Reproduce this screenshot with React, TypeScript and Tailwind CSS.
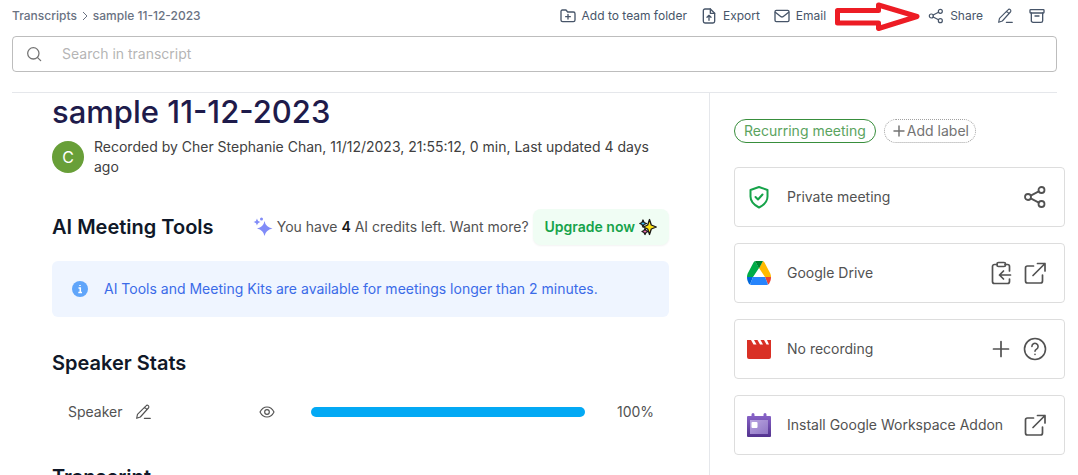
import type { ReactNode } from "react"

const App = () => {
  return (
    <div className="h-screen overflow-hidden bg-white pl-3 pr-[13px] font-['Inter',sans-serif] text-sm text-neutral-600">
      <Header />
      <SearchBar />
      <div className="mr-2 mt-5 border-t border-gray-200" />
      <div className="flex">
        <Transcript />
        <Sidebar />
      </div>
    </div>
  )
}


const Header = () => {
  return (
    <header className="mr-2 flex h-8 items-center justify-between text-xs text-[#475569]">
      <nav className="flex items-center gap-1 font-medium text-gray-500">
        <a href="#transcripts">Transcripts</a>
        <ChevronIcon />
        <a href="#sample">sample 11-12-2023</a>
      </nav>
      <div className="flex items-center">
        <HeaderAction icon={<FolderPlusIcon />} text="Add to team folder" />
        <HeaderAction icon={<FileUpIcon />} text="Export" />
        <HeaderAction icon={<MailIcon />} text="Email" />
        <PointerArrow />
        <HeaderAction icon={<ShareIcon className="size-4" />} text="Share" />
        <button aria-label="Rename" className="mr-4"><PencilIcon className="size-4" /></button>
        <button aria-label="Archive" className="mr-3"><ArchiveIcon /></button>
      </div>
    </header>
  )
}

type HeaderActionProps = { icon: ReactNode, text: string }
const HeaderAction = ({ icon, text }: HeaderActionProps) => {
  return (
    <button className="mr-3.5 flex items-center gap-1.5">
      {icon}
      <span>{text}</span>
    </button>
  )
}

const SearchBar = () => {
  return (
    <label className="mr-2 mt-1 flex h-9 items-center gap-5 rounded border border-neutral-400/70 px-[13px] text-neutral-500">
      <SearchIcon />
      <input
        type="text"
        aria-label="Search in transcript"
        placeholder="Search in transcript"
        className="w-full outline-none placeholder:text-neutral-400/80"
      />
    </label>
  )
}


const Transcript = () => {
  return (
    <main className="min-w-0 flex-1 px-10">
      <h1 className="text-[31px] font-medium leading-[38px] text-[#1e1b4b]">sample 11-12-2023</h1>
      <div className="mt-1.5 flex items-center gap-2.5">
        <span className="flex size-8 shrink-0 items-center justify-center rounded-full bg-[#689f38] text-base text-white">C</span>
        <p className="leading-5 text-neutral-700">
          Recorded by Cher Stephanie Chan, 11/12/2023, 21:55:12, 0 min, Last updated 4 days ago
        </p>
      </div>

      <section className="mt-8 flex items-center justify-between">
        <h2 className="text-xl font-semibold text-gray-900">AI Meeting Tools</h2>
        <div className="flex items-center gap-1">
          <SparklesIcon />
          <span>You have <b className="font-semibold text-neutral-900">4</b> AI credits left. Want more?</span>
          <button className="flex h-9 items-center gap-1 rounded-lg bg-green-50 px-3 font-semibold text-[#16a34a] shadow-xs">
            Upgrade now
            <SparkleEmoji />
          </button>
        </div>
      </section>

      <div className="mt-4 flex h-14 items-center gap-4 rounded-md bg-[#eff5ff] px-5 text-[#3b6be8]">
        <InfoIcon />
        <p>AI Tools and Meeting Kits are available for meetings longer than 2 minutes.</p>
      </div>

      <h2 className="mt-8 text-xl font-semibold text-gray-900">Speaker Stats</h2>
      <SpeakerRow name="Speaker" percent={100} />
      <h2 className="mt-9 text-xl font-semibold text-gray-900">Transcript</h2>
    </main>
  )
}

type SpeakerRowProps = { name: string, percent: number }
const SpeakerRow = ({ name, percent }: SpeakerRowProps) => {
  return (
    <div className="mt-5 flex h-[30px] items-center px-4">
      <div className="flex w-[243px] items-center gap-3">
        <span>{name}</span>
        <button aria-label="Rename speaker"><PencilIcon className="size-4" /></button>
        <button aria-label="Show speaker" className="ml-auto mr-9"><EyeIcon /></button>
      </div>
      <div className="h-2.5 flex-1 rounded-full">
        <div className="h-full rounded-full bg-[#03a9f4]" style={{ width: `${percent}%` }} />
      </div>
      <span className="ml-8 w-9">{percent}%</span>
    </div>
  )
}


const Sidebar = () => {
  return (
    <aside className="h-screen w-[356px] shrink-0 border-l border-gray-200 pl-6 pt-[26px]">
      <div className="flex gap-2">
        <button className="h-6 rounded-full border border-[#388e3c] px-[9px] text-[#5aa35e]">Recurring meeting</button>
        <button className="flex h-6 items-center rounded-full border border-dotted border-neutral-400 px-1.5 text-neutral-500">
          <PlusIcon className="size-4" width={2.2} />
          Add label
        </button>
      </div>
      <div className="mt-6 flex flex-col gap-4">
        <Card icon={<ShieldIcon />} text="Private meeting">
          <button aria-label="Share"><ShareIcon className="size-6" /></button>
        </Card>
        <Card icon={<DriveIcon />} text="Google Drive">
          <button aria-label="Copy to clipboard"><ClipboardIcon /></button>
          <button aria-label="Open Google Drive"><ExternalIcon /></button>
        </Card>
        <Card icon={<ClapperIcon />} text="No recording">
          <button aria-label="Add recording"><PlusIcon className="size-6" width={1.7} /></button>
          <button aria-label="Help"><HelpIcon /></button>
        </Card>
        <Card icon={<CalendarIcon />} text="Install Google Workspace Addon">
          <button aria-label="Install addon"><ExternalIcon /></button>
        </Card>
      </div>
    </aside>
  )
}

type CardProps = { icon: ReactNode, text: string, children: ReactNode }
const Card = ({ icon, text, children }: CardProps) => {
  return (
    <div className="flex h-[60px] items-center gap-4 rounded border border-neutral-300/80 pl-3 pr-[17px]">
      {icon}
      <span className="flex-1">{text}</span>
      <div className="flex gap-2.5 text-neutral-600">{children}</div>
    </div>
  )
}


type IconProps = { className?: string, width?: number, children: ReactNode }
const Icon = ({ className = "size-4", width = 1.5, children }: IconProps) => (
  <svg
    viewBox="0 0 24 24"
    className={`${className} shrink-0`}
    fill="none"
    stroke="currentColor"
    strokeWidth={width}
    strokeLinecap="round"
    strokeLinejoin="round"
    aria-hidden="true"
  >
    {children}
  </svg>
)

const ChevronIcon = () => (
  <svg viewBox="0 0 8 12" className="h-3 w-2" fill="none" stroke="currentColor" aria-hidden="true">
    <path d="M2 2l4 4-4 4" />
  </svg>
)

const FolderPlusIcon = () => (
  <Icon width={2}>
    <path d="M3.500 3A2 2 0 0 0 1.500 5v13a2.500 2.500 0 0 0 2.500 2.500h16a2.500 2.500 0 0 0 2.500-2.500V8.500A2.500 2.500 0 0 0 20 6h-8.500L9 3z" />
    <path d="M12 9.500v7M8.500 13h7" />
  </Icon>
)

const FileUpIcon = () => (
  <Icon width={2}>
    <path d="M14 1.500H6A2.500 2.500 0 0 0 3.500 4v16A2.500 2.500 0 0 0 6 22.500h12a2.500 2.500 0 0 0 2.500-2.500V8z" />
    <path d="M14 1.500V8h6.500M12 18.500v-7M9 14l3-3 3 3" />
  </Icon>
)

const MailIcon = () => (
  <Icon width={2}>
    <rect x="1.500" y="3.500" width="21" height="17" rx="2" />
    <path d="M2 6.500l8.500 6.500q1.500 1 3 0L22 6.500" />
  </Icon>
)

const ShareIcon = ({ className }: { className: string }) => (
  <Icon className={className} width={1.800}>
    <circle cx="5" cy="12" r="3" />
    <circle cx="18.500" cy="5" r="3" />
    <circle cx="18.500" cy="19" r="3" />
    <path d="M7.700 10.600l8.100-4.200M7.700 13.400l8.100 4.200" />
  </Icon>
)

const PencilIcon = ({ className }: { className: string }) => (
  <Icon className={className} width={1.700}>
    <path d="M2.500 21.500l1.200-6L16.500 2.700a2.400 2.400 0 0 1 3.600 3.300L8 19.500zM14.500 5l3.300 3M14 21.500h9" />
  </Icon>
)

const ArchiveIcon = () => (
  <Icon width={2}>
    <rect x="1.500" y="2.500" width="21" height="5" rx="1" />
    <path d="M3.500 7.500V19A2.500 2.500 0 0 0 6 21.500h12a2.500 2.500 0 0 0 2.500-2.500V7.500M9 12h6" />
  </Icon>
)

const SearchIcon = () => (
  <Icon width={1.900}>
    <circle cx="11" cy="11" r="8.500" />
    <path d="M17 17l5 5" />
  </Icon>
)

const EyeIcon = () => (
  <Icon width={1.700}>
    <path d="M1.500 12C4 7 8 4.500 12 4.500S20 7 22.500 12C20 17 16 19.500 12 19.500S4 17 1.500 12z" />
    <circle cx="12" cy="12" r="3.500" />
  </Icon>
)

const PlusIcon = ({ className, width }: { className: string, width: number }) => (
  <Icon className={className} width={width}>
    <path d="M12 4.500v15M4.500 12h15" />
  </Icon>
)

const ShieldIcon = () => (
  <Icon className="size-6 text-[#16a34a]" width={2}>
    <path d="M12 2l8.500 3v6.500c0 5-3.500 8.500-8.500 11-5-2.500-8.500-6-8.500-11V5z" />
    <path d="M8.500 12l2.500 2.500 4.500-5" />
  </Icon>
)

const ClipboardIcon = () => (
  <Icon className="size-6" width={1.700}>
    <path d="M8 3.500H5.500A2 2 0 0 0 3.500 5.500v15a2 2 0 0 0 2 2h13a2 2 0 0 0 2-2V18M16 3.500h2.500a2 2 0 0 1 2 2V10" />
    <rect x="8" y="1.500" width="8.500" height="4" rx="1.500" />
    <path d="M21.500 14H10.500M14.500 10l-4 4 4 4" />
  </Icon>
)

const ExternalIcon = () => (
  <Icon className="size-6" width={1.700}>
    <path d="M10.500 5H4.500a2 2 0 0 0-2 2v13a2 2 0 0 0 2 2h13a2 2 0 0 0 2-2v-6" />
    <path d="M14.500 2.500H22V10M22 2.500L10 14.500" />
  </Icon>
)

const HelpIcon = () => (
  <Icon className="size-6" width={1.600}>
    <circle cx="12" cy="12" r="10.500" />
    <path d="M8.900 9.500a3.100 3.100 0 1 1 4.700 2.600c-1 .6-1.600 1-1.600 2.200M12 17.200v.3" />
  </Icon>
)

const InfoIcon = () => (
  <svg viewBox="0 0 16 16" className="size-4 shrink-0" aria-hidden="true">
    <circle cx="8" cy="8" r="8" fill="#60a5fa" />
    <path d="M6.500 7h1.800v4.500M6.300 11.500h3.700M8 4v1" stroke="#fff" strokeWidth="1.500" fill="none" />
  </svg>
)

const SparklesIcon = () => (
  <svg viewBox="0 0 20 20" className="size-5 shrink-0" fill="#818cf8" aria-hidden="true">
    <path d="M11.500 4q1 6 8 7.500-7 1.500-8 7.500-1-6-7.500-7.500Q10.500 10 11.500 4z" />
    <path d="M4 1.500q.5 3 3.500 3.500Q4.500 5.500 4 8.500 3.500 5.500.5 5 3.500 4.500 4 1.500z" />
    <circle cx="8.500" cy="2" r="1.500" />
  </svg>
)

const SparkleEmoji = () => (
  <svg viewBox="0 0 18 18" className="size-[18px] shrink-0" stroke="#1c1917" strokeWidth="1.300" strokeLinejoin="round" aria-hidden="true">
    <path d="M4 2l1 2.500L7.500 5.500 5 6.500 4 9 3 6.500.8 5.500 3 4.500z" fill="#38bdf8" />
    <path d="M6 10.500l1 2 2 1-2 1-1 2-1-2-2-1 2-1z" fill="#f472b6" />
    <path d="M10.500 1.500l1.800 5.500 5 2-5 2-1.800 5.500L8.700 11l-4.200-2 4.200-2z" fill="#fde312" />
  </svg>
)

const DriveIcon = () => (
  <svg viewBox="0 0 24 24" className="size-6 shrink-0" aria-hidden="true">
    <path d="M8 0Q7 .5 6.500 1.500L.7 12.500Q0 14 0 16h6l6-9z" fill="#00ac47" />
    <path d="M16 0q1 .5 1.500 1.500l5.800 11Q24 14 24 16h-6l-6-9z" fill="#ffba00" />
    <path d="M8 0h8l-4 7.500z" fill="#00832d" />
    <path d="M0 16h6l-3 7.500Q2 23 1.500 22L.5 19.500Q0 18 0 16z" fill="#0066da" />
    <path d="M18 16h6q0 2-.5 3.500l-1 2.500q-.5 1-1.500 1.500z" fill="#ea4335" />
    <path d="M6 16h12l3 7.500q-1 .5-2 .5H5q-1 0-2-.5z" fill="#2684fc" />
  </svg>
)

const ClapperIcon = () => (
  <svg viewBox="0 0 24 24" className="size-6 shrink-0" aria-hidden="true">
    <path d="M0 3h4l2.500 4.500h3L7 3h3.500L13 7.500h3L13.500 3H17l2.500 4.500h2.500L20 3h4v17q0 2-2 2H2q-2 0-2-2z" fill="#d93025" />
  </svg>
)

const CalendarIcon = () => (
  <svg viewBox="0 0 24 24" className="size-6 shrink-0" aria-hidden="true">
    <defs>
      <linearGradient id="cal-body" x1="0" y1="0" x2="0" y2="1">
        <stop offset="0" stopColor="#8661c5" />
        <stop offset="1" stopColor="#53338f" />
      </linearGradient>
      <linearGradient id="cal-page" x1="0" y1="0" x2="1" y2="1">
        <stop offset="0" stopColor="#b9a5e0" />
        <stop offset="1" stopColor="#8f76c4" />
      </linearGradient>
    </defs>
    <path d="M6 1.500v4M18 1.500v4" stroke="#8661c5" strokeWidth="3" strokeLinecap="round" />
    <rect y="3" width="24" height="21" rx="1" fill="url(#cal-body)" />
    <rect x="3" y="7" width="18" height="14" fill="url(#cal-page)" />
    <rect x="4.500" y="9" width="6" height="6" rx="1" fill="#fff" />
  </svg>
)

// red hand-drawn pointer towards the Share button
const PointerArrow = () => (
  <svg viewBox="0 0 86 32" className="-ml-1.5 mr-2 h-8 w-[86px] shrink-0" aria-hidden="true">
    <path d="M3.500 10.500h41V5L83 16.500 44.500 28.500V23h-41z" fill="#fff" stroke="#ed1c24" strokeWidth="5" strokeLinejoin="round" />
  </svg>
)


export default App
